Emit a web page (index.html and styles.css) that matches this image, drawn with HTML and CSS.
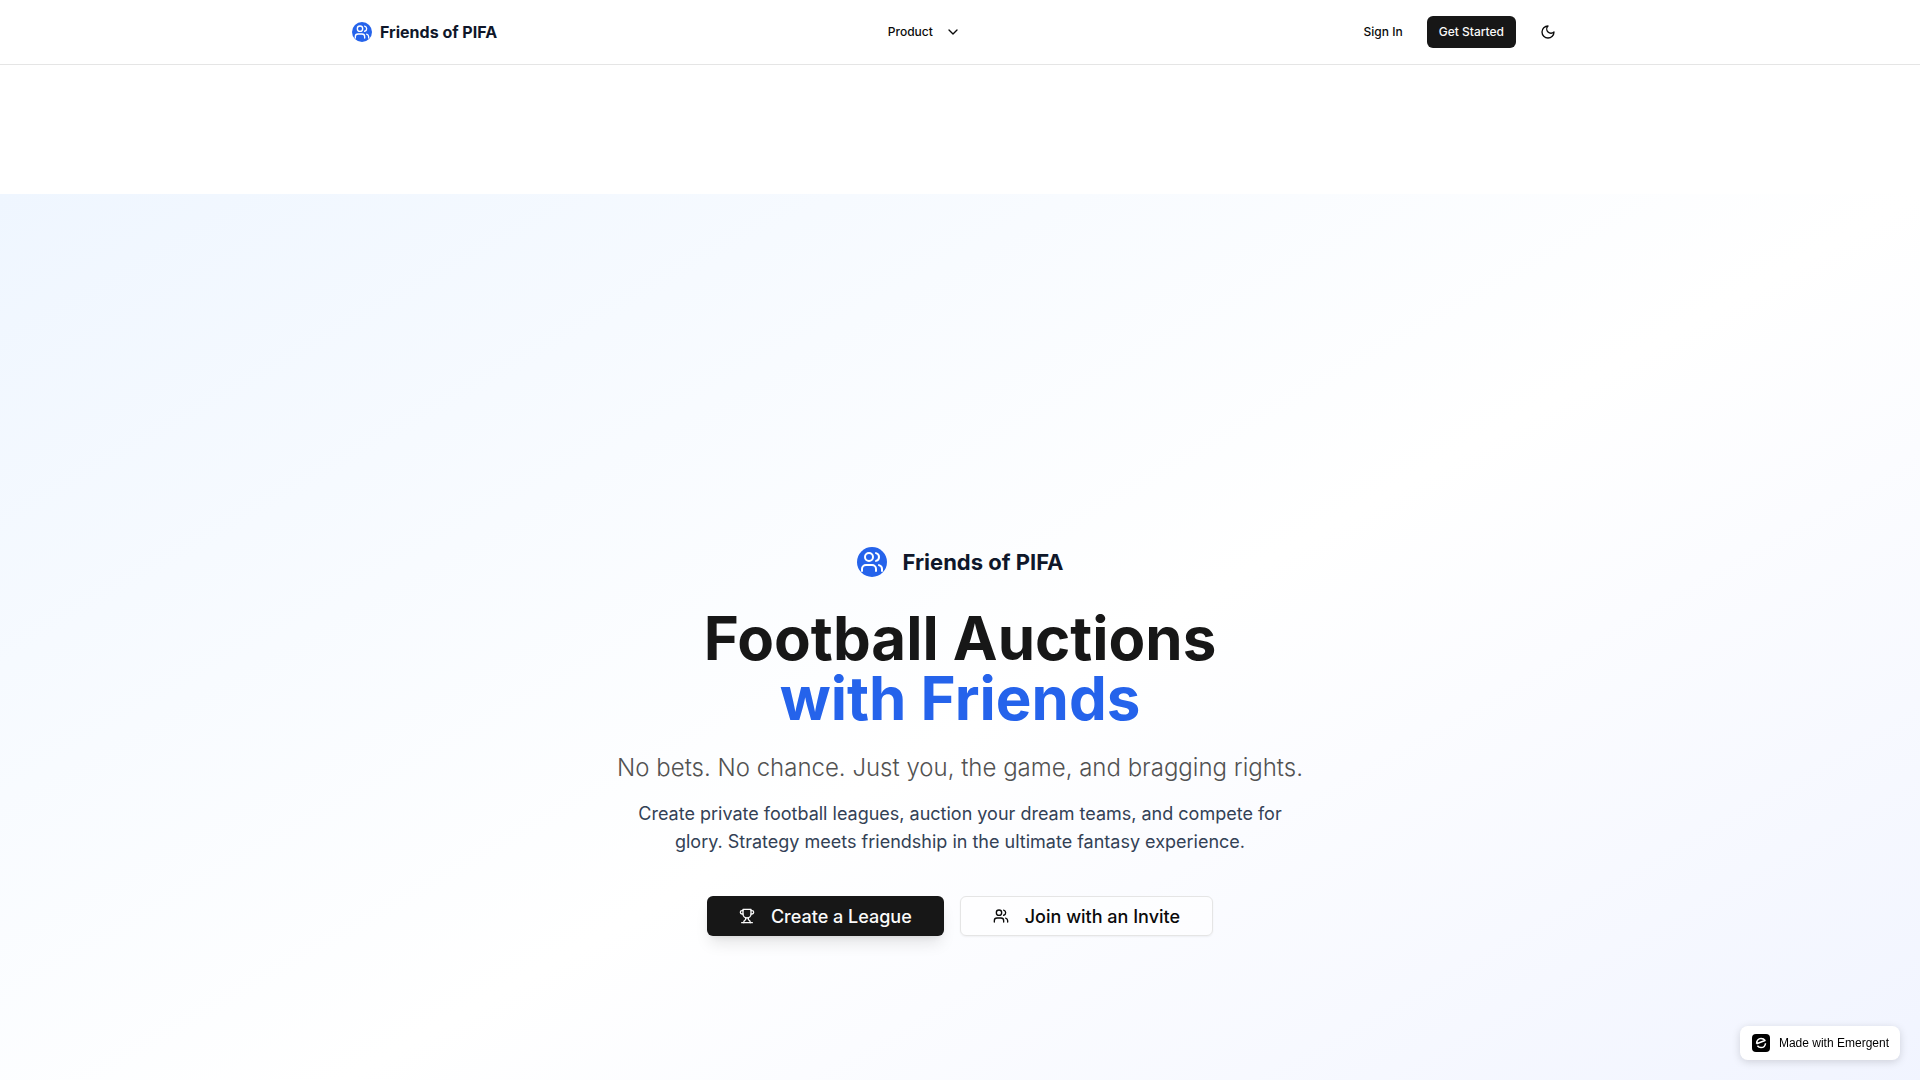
FILE: index.html
```html
<!DOCTYPE html>
<html lang="en">
<head>
<meta charset="utf-8">
<meta name="viewport" content="width=device-width, initial-scale=1">
<title>Friends of PIFA</title>
<link rel="stylesheet" href="styles.css">
</head>
<body>
<svg class="sprite" aria-hidden="true">
  <symbol id="users" viewBox="0 0 24 24">
    <path d="M16 21v-2a4 4 0 0 0-4-4H6a4 4 0 0 0-4 4v2"/>
    <circle cx="9" cy="7" r="4"/>
    <path d="M22 21v-2a4 4 0 0 0-3-3.870"/>
    <path d="M16 3.130a4 4 0 0 1 0 7.750"/>
  </symbol>
</svg>
<header class="site-header">
  <nav class="nav">
    <a class="brand" href="#">
      <span class="brand-mark"><svg class="icon"><use href="#users"/></svg></span>
      <span>Friends of PIFA</span>
    </a>
    <button class="nav-menu" type="button">Product
      <svg class="icon" viewBox="0 0 24 24"><path d="m6 9 6 6 6-6"/></svg>
    </button>
    <div class="nav-actions">
      <a class="btn-small" href="#">Sign In</a>
      <a class="btn-small btn-dark" href="#">Get Started</a>
      <button class="theme-toggle" type="button" aria-label="Toggle theme">
        <svg class="icon" viewBox="0 0 24 24"><path d="M12 3a6 6 0 0 0 9 9 9 9 0 1 1-9-9Z"/></svg>
      </button>
    </div>
  </nav>
</header>
<main>
  <section class="hero">
    <div class="hero-brand">
      <span class="brand-mark brand-mark-large"><svg class="icon"><use href="#users"/></svg></span>
      <span>Friends of PIFA</span>
    </div>
    <h1 class="headline">Football Auctions <span class="headline-accent">with Friends</span></h1>
    <p class="tagline">No bets. No chance. Just you, the game, and bragging rights.</p>
    <p class="lead">Create private football leagues, auction your dream teams, and compete for glory. Strategy meets friendship in the ultimate fantasy experience.</p>
    <div class="cta-row">
      <button class="cta btn-dark cta-primary" type="button">
        <svg class="icon" viewBox="0 0 24 24"><path d="M6 9H4.500a2.500 2.500 0 0 1 0-5H6"/><path d="M18 9h1.500a2.500 2.500 0 0 0 0-5H18"/><path d="M4 22h16"/><path d="M10 14.660V17c0 .55-.47.98-.97 1.210C7.850 18.750 7 20.240 7 22"/><path d="M14 14.660V17c0 .55.47.98.97 1.210C16.150 18.750 17 20.240 17 22"/><path d="M18 2H6v7a6 6 0 0 0 12 0V2Z"/></svg>
        Create a League
      </button>
      <button class="cta cta-outline" type="button">
        <svg class="icon"><use href="#users"/></svg>
        Join with an Invite
      </button>
    </div>
  </section>
</main>
<a class="made-with" href="#">
  <svg class="made-with-logo" viewBox="0 0 18 18"><rect width="18" height="18" rx="4" fill="#000"/><path d="M4.600 9.800C4.300 6.600 6.500 4.500 9 4.500c1.800 0 3.200.7 4 2L4.600 9.800M5.400 11.700c.9 1.200 2.100 1.800 3.600 1.800 2.400 0 4.300-1.700 4.500-4.300" fill="none" stroke="#fff" stroke-width="1.500" stroke-linejoin="round"/></svg>
  Made with Emergent
</a>
</body>
</html>
```
FILE: styles.css
```css
* {
  box-sizing: border-box;
}

body {
  margin: 0;
  height: 100vh;
  overflow: hidden;
  background: #fff;
  color: #0a0a0a;
  font-family: Inter, "Liberation Sans", sans-serif;
}

a {
  color: inherit;
  text-decoration: none;
}

button {
  border: 0;
  padding: 0;
  background: none;
  color: inherit;
  font: inherit;
  cursor: pointer;
}

.sprite {
  display: none;
}

.icon {
  width: 16px;
  height: 16px;
  flex: none;
  fill: none;
  stroke: currentColor;
  stroke-width: 2;
  stroke-linecap: round;
  stroke-linejoin: round;
}

.site-header {
  border-bottom: 1px solid #e5e5e5;
  background: #fff;
}

.nav {
  display: flex;
  align-items: center;
  justify-content: space-between;
  max-width: 1280px;
  height: 64px;
  margin: 0 auto;
  padding: 0 32px;
}

.brand {
  display: flex;
  align-items: center;
  gap: 8px;
  color: #0f172a;
  font-size: 16px;
  font-weight: 700;
}

.brand-mark {
  display: flex;
  align-items: center;
  justify-content: center;
  width: 20px;
  height: 20px;
  border-radius: 50%;
  background: #2563eb;
  color: #fff;
}

.brand-mark-large {
  width: 30px;
  height: 30px;
}

.brand-mark-large .icon {
  width: 24px;
  height: 24px;
}

.nav-menu {
  display: flex;
  align-items: center;
  gap: 12px;
  font-size: 12px;
  font-weight: 500;
  line-height: 16px;
}

.nav-actions {
  display: flex;
  align-items: center;
  gap: 12px;
}

.btn-small {
  padding: 0 12px;
  border-radius: 6px;
  font-size: 12px;
  font-weight: 500;
  line-height: 32px;
}

.btn-dark {
  background: #171717;
  color: #fafafa;
}

.theme-toggle {
  display: flex;
  align-items: center;
  justify-content: center;
  width: 40px;
  height: 40px;
}

.hero {
  display: flex;
  flex-direction: column;
  align-items: center;
  min-height: 100vh;
  margin-top: 129px;
  padding: 352px 32px 0;
  background: linear-gradient(to bottom right, #eff6ff, #fff, #eef2ff);
  text-align: center;
}

.hero-brand {
  display: flex;
  align-items: center;
  gap: 16px;
  color: #0f172a;
  font-size: 22px;
  font-weight: 700;
  line-height: 32px;
}

.headline {
  margin: 30px 0 0;
  color: #171717;
  font-size: 60px;
  font-weight: 700;
  line-height: 60px;
}

.headline-accent {
  display: block;
  color: #2563eb;
}

.tagline {
  margin: 24px 0 0;
  color: #525252;
  font-size: 24px;
  font-weight: 300;
  line-height: 32px;
}

.lead {
  max-width: 672px;
  margin: 16px 0 0;
  color: #334155;
  font-size: 18px;
  line-height: 28px;
}

.cta-row {
  display: flex;
  gap: 16px;
  margin-top: 40px;
}

.cta {
  display: flex;
  align-items: center;
  gap: 16px;
  height: 40px;
  padding: 0 32px;
  border-radius: 6px;
  font-size: 18px;
  font-weight: 500;
}

.cta-primary {
  box-shadow: 0 10px 15px -3px rgba(0, 0, 0, 0.1), 0 4px 6px -4px rgba(0, 0, 0, 0.1);
}

.cta-outline {
  border: 1px solid #e5e5e5;
  background: rgba(255, 255, 255, 0.5);
  box-shadow: 0 1px 2px rgba(0, 0, 0, 0.05);
}

.made-with {
  position: fixed;
  right: 20px;
  bottom: 20px;
  display: flex;
  align-items: center;
  gap: 9px;
  height: 34px;
  padding: 0 11px 0 12px;
  border-radius: 8px;
  background: #fff;
  box-shadow: 0 2px 8px rgba(0, 0, 0, 0.15);
  color: #000;
  font-family: "Liberation Sans", sans-serif;
  font-size: 12px;
}

.made-with-logo {
  width: 18px;
  height: 18px;
}
```
